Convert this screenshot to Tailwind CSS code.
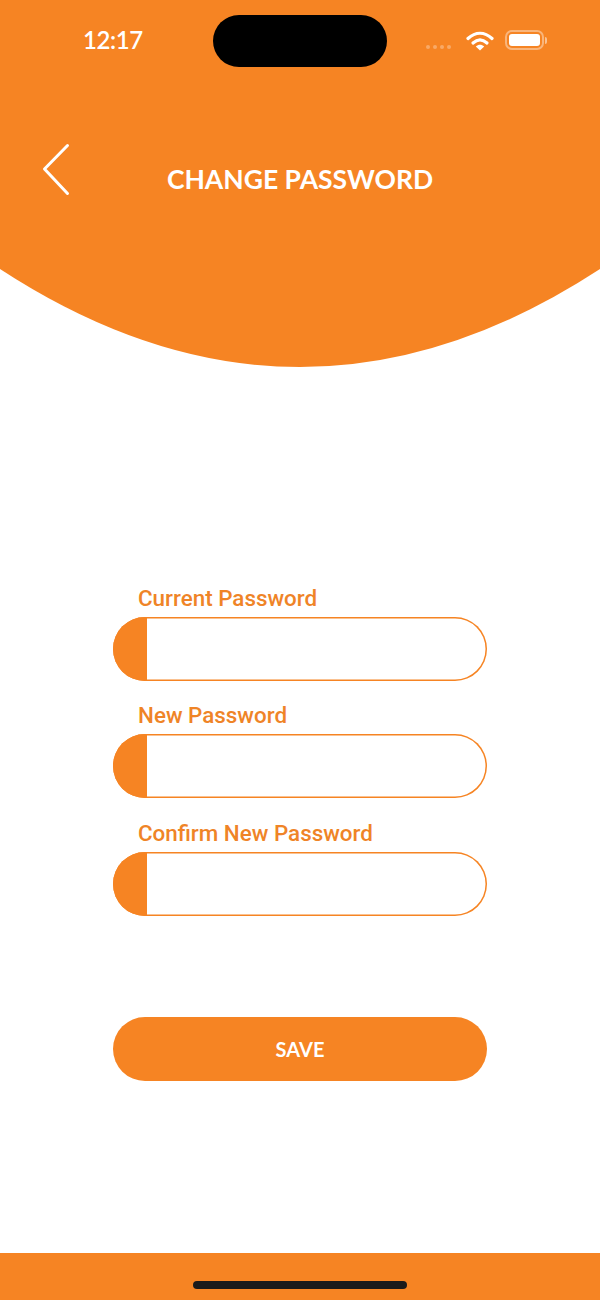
<!DOCTYPE html>
<html lang="en">
<head>
    <meta charset="UTF-8">
    <meta name="viewport" content="width=device-width, initial-scale=1.0">
    <title>Change Password</title>
    <script src="https://cdn.jsdelivr.net/npm/@tailwindcss/browser@4"></script>
</head>
<body class="bg-white w-[600px] h-[1300px] overflow-hidden flex flex-col font-['Lato',sans-serif]">
    <!-- header with curved bottom -->
    <header class="relative h-[368px] shrink-0">
        <svg class="absolute inset-0" width="600" height="368" viewBox="0 0 600 368">
            <path d="M0 0H600V269Q300 465 0 269Z" fill="#f68423"/>
        </svg>

        <div class="relative h-[82px] pt-[15px] flex justify-center">
            <span class="absolute left-[83px] top-[24px] text-white text-[24px] tracking-[-0.4px] leading-[32px] font-semibold">12:17</span>
            <div class="w-[174px] h-[52px] bg-black rounded-[26px]"></div>
            <div class="absolute left-[426px] top-[45px] flex gap-[3px]">
                <span class="size-[4px] rounded-full bg-white/30"></span>
                <span class="size-[4px] rounded-full bg-white/30"></span>
                <span class="size-[4px] rounded-full bg-white/30"></span>
                <span class="size-[4px] rounded-full bg-white/30"></span>
            </div>
            <svg class="absolute left-[466px] top-[30px]" width="28" height="21" viewBox="0 0 28 21">
                <path d="M2 8.5C9.5 1.5 18.5 1.5 26 8.5" fill="none" stroke="#fff" stroke-width="3.2" stroke-linecap="round"/>
                <path d="M7 13C11.500 9 16.500 9 21 13" fill="none" stroke="#fff" stroke-width="3.200" stroke-linecap="round"/>
                <path d="M9.800 16.500C12.500 14.300 15.500 14.300 18.200 16.500L14 20.500Z" fill="#fff"/>
            </svg>
            <div class="absolute left-[505px] top-[30px] w-[39px] h-[20px] border-2 border-white/40 rounded-[7px] p-[2px]">
                <div class="w-full h-full bg-white rounded-[3px]"></div>
            </div>
            <div class="absolute left-[545px] top-[37px] w-[2px] h-[7px] bg-white/50 rounded-r-full"></div>
        </div>

        <svg class="absolute left-[42px] top-[143px]" width="28" height="53" viewBox="0 0 28 53">
            <path d="M25.500 2.500L2.500 26L25.500 50.500" fill="none" stroke="#fff" stroke-width="3" stroke-linecap="round" stroke-linejoin="round"/>
        </svg>
        <h1 class="relative mt-[81px] text-center text-white text-[26.5px] leading-[32px] font-bold">CHANGE PASSWORD</h1>
    </header>

    <main class="w-[374px] mx-auto mt-[215px] flex flex-col grow">
        <div class="flex flex-col gap-[21px] font-['Roboto',sans-serif]">
            <label class="block">
                <span class="block pl-[25px] pt-[1px] h-[34px] text-[#ef8427] text-[22.4px] leading-[28px] font-medium">Current Password</span>
                <span class="flex h-[64px] rounded-[32px] overflow-hidden shadow-[inset_0_0_0_1.5px_#f68423]">
                    <span class="w-[34px] bg-[#f68423]"></span>
                    <input type="password" class="grow outline-none min-w-0 bg-transparent">
                </span>
            </label>
            <label class="block">
                <span class="block pl-[25px] -mt-[1px] h-[33px] text-[#ef8427] text-[22.4px] leading-[28px] font-medium">New Password</span>
                <span class="flex h-[64px] rounded-[32px] overflow-hidden shadow-[inset_0_0_0_1.5px_#f68423]">
                    <span class="w-[34px] bg-[#f68423]"></span>
                    <input type="password" class="grow outline-none min-w-0 bg-transparent">
                </span>
            </label>
            <label class="block">
                <span class="block pl-[25px] h-[33px] text-[#ef8427] text-[22.4px] leading-[28px] font-medium">Confirm New Password</span>
                <span class="flex h-[64px] rounded-[32px] overflow-hidden shadow-[inset_0_0_0_1.5px_#f68423]">
                    <span class="w-[34px] bg-[#f68423]"></span>
                    <input type="password" class="grow outline-none min-w-0 bg-transparent">
                </span>
            </label>
        </div>
        <button class="mt-[101px] h-[64px] rounded-[32px] bg-[#f68423] text-white text-[20px] font-bold">SAVE</button>
    </main>

    <footer class="h-[47px] shrink-0 bg-[#f68423] flex justify-center pt-[28px]">
        <div class="w-[214px] h-[8px] rounded-full bg-[#1a1a1a]"></div>
    </footer>
</body>
</html>
